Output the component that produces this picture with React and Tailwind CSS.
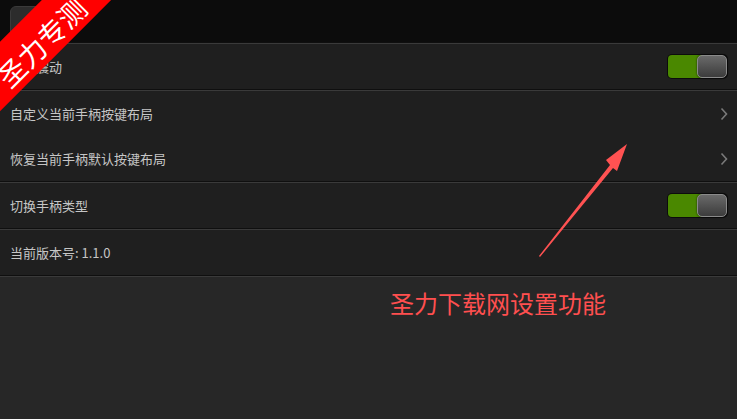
const FONT = { fontFamily: '"Noto Sans CJK SC", "Noto Sans", sans-serif' };

function Divider() {
    return (
        <div>
            <div className="h-px bg-[#0f0f0f]" />
            <div className="h-px bg-[#3a3a3a]" />
        </div>
    );
}

function Toggle() {
    return (
        <div className="relative w-[61px] h-[25px] rounded-[5px] bg-[#0c0c0c] p-[1px] flex">
            <div className="w-[34px] h-full rounded-l-[4px] bg-[#4a8800]" />
            <div className="absolute right-[1px] top-[1px] w-[30px] h-[23px] rounded-[5px] border border-[#8a8a8a] bg-gradient-to-b from-[#6a6a6a] to-[#3c3c3c] shadow-[0_0_2px_rgba(0,0,0,0.8)]" />
        </div>
    );
}

function Chevron() {
    return (
        <svg width="8" height="14" viewBox="0 0 8 14" fill="none">
            <path d="M1.5 1.5 L6.5 7 L1.5 12.5" stroke="#7a7a7a" strokeWidth="1.6" />
        </svg>
    );
}

function Row({ label, right }) {
    return (
        <div className="h-[45px] flex items-center justify-between pl-[10px] pr-[9px]">
            <span className="text-[13px] text-[#c6c6c6] leading-none">{label}</span>
            {right}
        </div>
    );
}

export default function App() {
    return (
        <div className="relative w-[737px] h-[419px] overflow-hidden bg-[#272727] flex flex-col" style={FONT}>
            {/* top bar */}
            <div className="h-[42px] bg-[#0c0c0c] flex items-start pl-[10px] pt-[6px] shrink-0">
                <div className="w-[44px] h-[32px] rounded-[6px] bg-[#2c2c2c] border border-[#3a3a3a]" />
            </div>
            <Divider />

            <div className="bg-[#1f1f1f]">
                <Row label="手柄震动" right={<Toggle />} />
                <Divider />
                <Row label="自定义当前手柄按键布局" right={<Chevron />} />
                <Row label="恢复当前手柄默认按键布局" right={<Chevron />} />
                <Divider />
                <Row label="切换手柄类型" right={<Toggle />} />
                <Divider />
                <Row label="当前版本号: 1.1.0" />
                <Divider />
            </div>

            <div className="pl-[390px] pt-[14px]">
                <span className="text-[24px] leading-none text-[#ff4f4f]">圣力下载网设置功能</span>
            </div>

            {/* annotation arrow */}
            <svg className="absolute left-0 top-0" width="737" height="419" viewBox="0 0 737 419">
                <polygon points="539,256 610,165 606,160 627,144 617,171 613,168 540,257" fill="#ff5252" />
            </svg>

            {/* corner ribbon */}
            <div className="absolute left-[-62px] top-[14px] w-[200px] h-[49px] bg-[#ff0000] -rotate-45 flex items-center justify-center pt-[9px]">
                <span className="text-[28px] text-white leading-none">圣力专测</span>
            </div>
        </div>
    );
}
